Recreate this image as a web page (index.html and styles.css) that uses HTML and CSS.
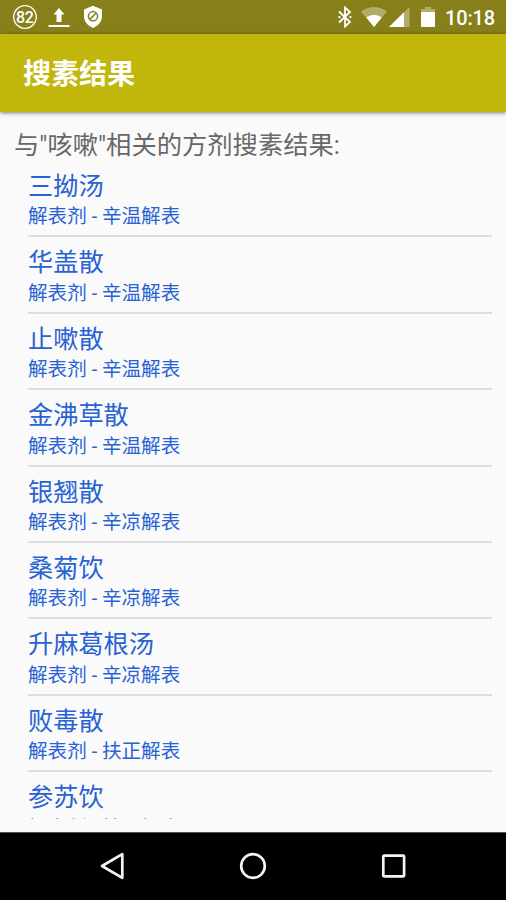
FILE: index.html
```html
<!DOCTYPE html>
<html lang="zh-CN">
<head>
<meta charset="utf-8">
<title>搜素结果</title>
<link rel="stylesheet" href="styles.css">
</head>
<body>
<div class="screen">
  <div class="status">
    <svg class="badge" width="26" height="26" viewBox="0 0 26 26"><circle cx="13" cy="13" r="11.3" fill="none" stroke="#fff" stroke-width="1.3"/><text x="12.7" y="18.500" text-anchor="middle">82</text></svg>
    <svg class="upload" width="22" height="20" viewBox="0 0 22 20" fill="#fff"><path d="M11 0l5.500 6.500H13.500v7.500h-5V6.500H5.500z"/><path d="M.5 17h21v2H.5z"/></svg>
    <svg class="shield" width="20" height="24" viewBox="0 0 20 24"><path d="M10 .8l9 3.600v6.600c0 5.500-3.800 9.800-9 12-5.200-2.200-9-6.500-9-12V4.400z" fill="#fff"/><circle cx="10" cy="11.200" r="4.600" fill="none" stroke="#87801a" stroke-width="1.500"/><path d="M6.800 14.400l6.400-6.400" stroke="#87801a" stroke-width="1.500"/></svg>
    <div class="spacer"></div>
    <svg class="bt" width="14" height="22" viewBox="0 0 14 22" fill="none" stroke="#fff" stroke-width="1.800"><path d="M1 5.500l11 10.500-5 4.500V1.500l5 4.500L1 16.500"/><path d="M.5 11h1.800M11.500 11h1.800"/></svg>
    <svg class="wifi" width="26" height="20" viewBox="0 0 26 20" fill="#fff"><path d="M0 4.500Q13-4.500 26 4.500L13 20z" opacity=".35"/><path d="M5.300 10.500Q13 5 20.700 10.500L13 20z"/></svg>
    <svg class="signal" width="21" height="20" viewBox="0 0 21 20" fill="#fff"><path d="M0 20L20.500 0v20z" opacity=".35"/><path d="M0 20L15 5.300V20z"/></svg>
    <svg class="battery" width="14" height="20" viewBox="0 0 14 20" fill="#fff"><path d="M0 2h4V0h6v2h4v3H0z" opacity=".35"/><path d="M0 5h14v15H0z"/></svg>
    <span class="clock">10:18</span>
  </div>
  <header class="appbar"><h1>搜素结果</h1></header>
  <main class="content">
    <p class="heading">与"咳嗽"相关的方剂搜素结果:</p>
    <ul class="list">
      <li><b>三拗汤</b><span>解表剂 - 辛温解表</span></li>
      <li><b>华盖散</b><span>解表剂 - 辛温解表</span></li>
      <li><b>止嗽散</b><span>解表剂 - 辛温解表</span></li>
      <li><b>金沸草散</b><span>解表剂 - 辛温解表</span></li>
      <li><b>银翘散</b><span>解表剂 - 辛凉解表</span></li>
      <li><b>桑菊饮</b><span>解表剂 - 辛凉解表</span></li>
      <li><b>升麻葛根汤</b><span>解表剂 - 辛凉解表</span></li>
      <li><b>败毒散</b><span>解表剂 - 扶正解表</span></li>
      <li><b>参苏饮</b><span>解表剂 - 扶正解表</span></li>
    </ul>
  </main>
  <nav class="navbar">
    <svg width="28" height="28" viewBox="0 0 28 28"><path d="M3 14L23.300 2.200v23.600z"/></svg>
    <svg width="28" height="28" viewBox="0 0 28 28"><circle cx="14" cy="14" r="11.800"/></svg>
    <svg width="28" height="28" viewBox="0 0 28 28"><rect x="3.300" y="3.600" width="20.800" height="20.800" rx=".8"/></svg>
  </nav>
</div>
</body>
</html>
```

FILE: styles.css
```css
* { box-sizing: border-box; margin: 0; padding: 0; }
body { font-family: Roboto, "Noto Sans CJK SC", sans-serif; background: #fafafa; }
.screen { width: 506px; height: 900px; display: flex; flex-direction: column; overflow: hidden; }
.status { height: 34px; flex: none; display: flex; align-items: center; background: #87801a; padding: 0 11px 0 12px; }
.status svg { flex: none; }
.badge text { font: 500 16px Roboto, sans-serif; fill: #fff; letter-spacing: -.5px; }
.upload { margin-left: 10px; margin-top: 1px; }
.shield { margin-left: 13px; }
.spacer { flex: 1; }
.wifi { margin-left: 9px; }
.signal { margin-left: 2px; }
.battery { margin-left: 11px; }
.clock { margin-left: 10px; width: 50px; color: #fff; font-size: 20px; font-weight: 500; line-height: 34px; padding-top: 1px; letter-spacing: -.15px; white-space: nowrap; }
.appbar { height: 78px; flex: none; background: #c1b60c; display: flex; align-items: center; padding: 4px 0 0 23px; box-shadow: 0 1px 4px rgba(0,0,0,.5); z-index: 1; }
.appbar h1 { color: #fff; font-size: 28px; line-height: 40px; font-weight: 700; }
.content { flex: 1; min-height: 0; padding: 16px 14px 13px; display: flex; flex-direction: column; }
.heading { flex: none; color: #686868; font-size: 25.3px; line-height: 34px; padding-top: 1px; margin-bottom: -1px; white-space: nowrap; }
.list { flex: 1; min-height: 0; overflow: hidden; list-style: none; padding-left: 14px; }
.list li { height: 76.4px; padding-top: 9px; border-bottom: 2px solid #dedede; color: #2862d4; }
.list li:first-child { height: 75.4px; padding-top: 8px; }
.list b, .list span { display: block; white-space: nowrap; }
.list b { font-size: 25.2px; line-height: 34px; font-weight: 400; }
.list span { font-size: 19.6px; line-height: 26px; padding-top: .5px; }
.list li:first-child span { padding-top: 0; }
.navbar { height: 68px; flex: none; background: #000; border-top: 1px solid #555; padding-bottom: 1px; display: flex; justify-content: center; align-items: center; gap: 112.500px; }
.navbar svg { fill: none; stroke: #f4f4f4; stroke-width: 2.700; stroke-linejoin: round; }
```
